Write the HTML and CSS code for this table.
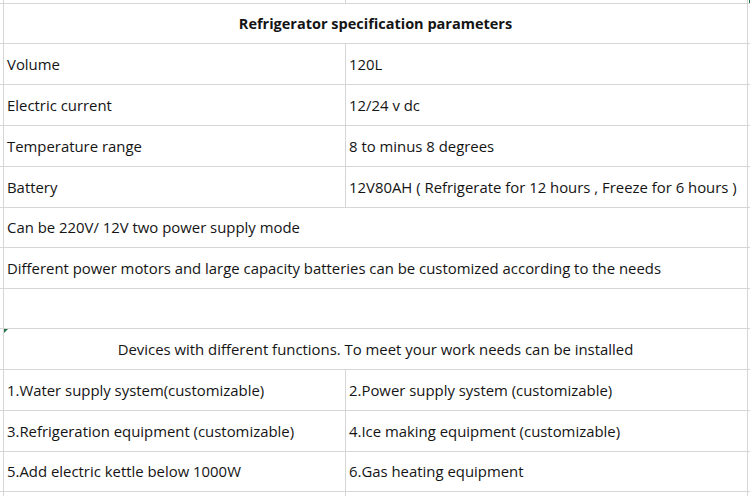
FILE: index.html
```html
<!DOCTYPE html>
<html>
<head>
<meta charset="utf-8">
<link rel="stylesheet" href="styles.css">
</head>
<body>
<div class="sheet">
  <div class="c"></div><div class="c"></div><div class="c"></div><div class="c sel"></div>

  <div class="c"></div><div class="c span title">Refrigerator specification parameters</div><div class="c"></div>

  <div class="c"></div><div class="c">Volume</div><div class="c">120L</div><div class="c"></div>
  <div class="c"></div><div class="c">Electric current</div><div class="c">12/24 v dc</div><div class="c"></div>
  <div class="c"></div><div class="c">Temperature range</div><div class="c">8 to minus 8 degrees</div><div class="c"></div>
  <div class="c"></div><div class="c">Battery</div><div class="c">12V80AH ( Refrigerate for 12 hours , Freeze for 6 hours )</div><div class="c"></div>

  <div class="c"></div><div class="c span">Can be 220V/ 12V two power supply mode</div><div class="c"></div>
  <div class="c"></div><div class="c span">Different power motors and large capacity batteries can be customized according to the needs</div><div class="c"></div>
  <div class="c"></div><div class="c span"></div><div class="c"></div>
  <div class="c"></div><div class="c span center note">Devices with different functions. To meet your work needs can be installed</div><div class="c"></div>

  <div class="c"></div><div class="c">1.Water supply system(customizable)</div><div class="c">2.Power supply system (customizable)</div><div class="c"></div>
  <div class="c"></div><div class="c">3.Refrigeration equipment (customizable)</div><div class="c">4.Ice making equipment (customizable)</div><div class="c"></div>
  <div class="c"></div><div class="c">5.Add electric kettle below 1000W</div><div class="c">6.Gas heating equipment</div><div class="c"></div>

  <div class="c"></div><div class="c"></div><div class="c"></div><div class="c"></div>
</div>
</body>
</html>
```
FILE: styles.css
```css
html, body {
  margin: 0;
  padding: 0;
  background: #ffffff;
}
body {
  width: 750px;
  height: 496px;
  overflow: hidden;
  font-family: "Open Sans", "Noto Sans CJK SC", sans-serif;
  font-size: 14.9px;
  color: #141414;
}
.sheet {
  display: grid;
  grid-template-columns: 3px 341px 401px 2px;
  grid-template-rows: 3px 39px 40px 40px 40px 40px 39px 40px 39px 40px 40px 40px 39px 4px;
  gap: 1px;
  background: #d6d6d6;
  width: 750px;
  height: 496px;
}
.c {
  background: #ffffff;
  display: flex;
  align-items: center;
  padding: 0 0 1px 3px;
  white-space: nowrap;
  overflow: visible;
  position: relative;
}
.span {
  grid-column: span 2;
}
.title {
  justify-content: center;
  font-weight: bold;
  font-size: 14.5px;
  padding: 0 0 1px 0;
}
.center {
  justify-content: center;
  padding: 0 0 1px 0;
}
.note::before {
  content: "";
  position: absolute;
  left: 0;
  top: 0;
  width: 0;
  height: 0;
  border-top: 4px solid #217346;
  border-right: 4px solid transparent;
}
.sel::after {
  content: "";
  position: absolute;
  right: 0;
  top: 0;
  width: 2px;
  height: 3px;
  background: #217346;
}
```
